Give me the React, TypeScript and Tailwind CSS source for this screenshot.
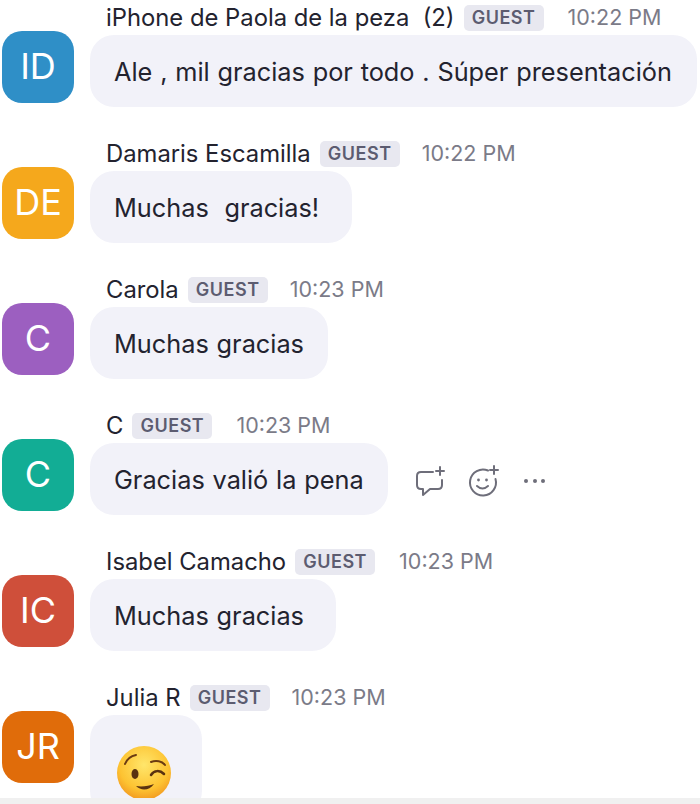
const messages = [
  { initials: "ID", color: "bg-[#2f8fc7]", name: "iPhone de Paola de la peza  (2)", time: "10:22 PM", text: "Ale , mil gracias por todo . Súper presentación", width: "w-[607px]", timeGap: "ml-[24px]" },
  { initials: "DE", color: "bg-[#f5a81c]", name: "Damaris Escamilla", time: "10:22 PM", text: "Muchas  gracias!", width: "w-[262px]", timeGap: "ml-[22px]" },
  { initials: "C", color: "bg-[#9c5fc0]", name: "Carola", time: "10:23 PM", text: "Muchas gracias", width: "w-[238px]", timeGap: "ml-[22px]" },
  { initials: "C", color: "bg-[#12ad95]", name: "C", time: "10:23 PM", text: "Gracias valió la pena", width: "w-[298px]", timeGap: "ml-[24px]", actions: true },
  { initials: "IC", color: "bg-[#cf4f3a]", name: "Isabel Camacho", time: "10:23 PM", text: "Muchas gracias", width: "w-[246px]", timeGap: "ml-[24px]" },
  { initials: "JR", color: "bg-[#e06c0a]", name: "Julia R", time: "10:23 PM", width: "w-[112px]", timeGap: "ml-[22px]", emoji: true },
];

function WinkEmoji() {
  return (
    <svg width="56" height="56" viewBox="0 0 56 56">
      <defs>
        <radialGradient id="face" cx="50%" cy="35%" r="70%">
          <stop offset="0%" stopColor="#ffe66b" />
          <stop offset="65%" stopColor="#fdc332" />
          <stop offset="100%" stopColor="#f0911c" />
        </radialGradient>
      </defs>
      <circle cx="28" cy="28" r="27" fill="url(#face)" />
      <path d="M9 19 C11 14 15 11 20 10" fill="none" stroke="#6b3b12" strokeWidth="2" strokeLinecap="round" />
      <path d="M35 17 C40 15 46 16 49 20" fill="none" stroke="#6b3b12" strokeWidth="2" strokeLinecap="round" />
      <ellipse cx="19" cy="29" rx="3.5" ry="5" fill="#5a3210" />
      <path d="M35 30 C38 25 44 25 48 29" fill="none" stroke="#5a3210" strokeWidth="2.5" strokeLinecap="round" />
      <path d="M20 41 C25 46 33 46 38 39 C33 41 26 42 20 41 Z" fill="#5a3210" />
    </svg>
  );
}

function Actions() {
  return (
    <div className="ml-[27px] mt-[4px] flex items-center text-[#6e6e7a]">
      <svg width="32" height="32" viewBox="0 0 32 32" fill="none" stroke="currentColor" strokeWidth="2" strokeLinecap="round" strokeLinejoin="round">
        <path d="M18 7 H6 Q2 7 2 11 V20 Q2 24 6 24 H8 V30 L15 24 H23 Q27 24 27 20 V15" />
        <path d="M25 2 V10 M21 6 H29" />
      </svg>
      <svg className="ml-[21px]" width="32" height="32" viewBox="0 0 32 32" fill="none" stroke="currentColor" strokeWidth="2" strokeLinecap="round">
        <path d="M20 5.5 A13 13 0 1 0 27.5 14" />
        <circle cx="10.5" cy="15" r="1.4" fill="currentColor" stroke="none" />
        <circle cx="18.5" cy="15" r="1.4" fill="currentColor" stroke="none" />
        <path d="M9 21 Q14.5 26 20 21" />
        <path d="M26 1 V9 M22 5 H30" />
      </svg>
      <div className="ml-[24px] flex gap-[4.5px]">
        <span className="size-[4px] rounded-full bg-current" />
        <span className="size-[4px] rounded-full bg-current" />
        <span className="size-[4px] rounded-full bg-current" />
      </div>
    </div>
  );
}

export default function App() {
  return (
    <div className="relative h-[804px] w-[700px] overflow-hidden bg-white font-['Inter',sans-serif] text-[#23232f]">
      <div className="flex flex-col gap-[29px]">
        {messages.map((m, i) => (
          <div key={i} className="flex gap-[16px] pl-[2px]">
            <div className={`mt-[31px] flex size-[72px] shrink-0 items-center justify-center rounded-[20px] pb-[3px] text-[36px] text-white ${m.color}`}>
              {m.initials}
            </div>
            <div>
              <div className="flex h-[35px] items-center whitespace-pre pl-[16px] text-[23.8px] leading-none">
                <span>{m.name}</span>
                <span className="ml-[9px] flex h-[26px] w-[80px] items-center justify-center rounded-[5px] bg-[#e8e8f0] text-[18px] font-semibold tracking-[0.5px] text-[#5c5c70]">
                  GUEST
                </span>
                <span className={`text-[21.5px] text-[#7b7b88] ${m.timeGap}`}>{m.time}</span>
              </div>
              <div className="flex items-start">
                {m.emoji ? (
                  <div className={`h-[100px] rounded-[24px] bg-[#f2f2f9] pl-[26px] pt-[30px] ${m.width}`}>
                    <WinkEmoji />
                  </div>
                ) : (
                  <div className={`flex h-[72px] items-center rounded-[24px] bg-[#f2f2f9] pl-[24px] pt-[2px] text-[25.3px] [word-spacing:0.7px] whitespace-pre ${m.width}`}>
                    {m.text}
                  </div>
                )}
                {m.actions && <div className="flex h-[72px] items-center"><Actions /></div>}
              </div>
            </div>
          </div>
        ))}
      </div>
      <div className="absolute inset-x-0 bottom-0 h-[6px] bg-[#f0f0f0]" />
    </div>
  );
}
